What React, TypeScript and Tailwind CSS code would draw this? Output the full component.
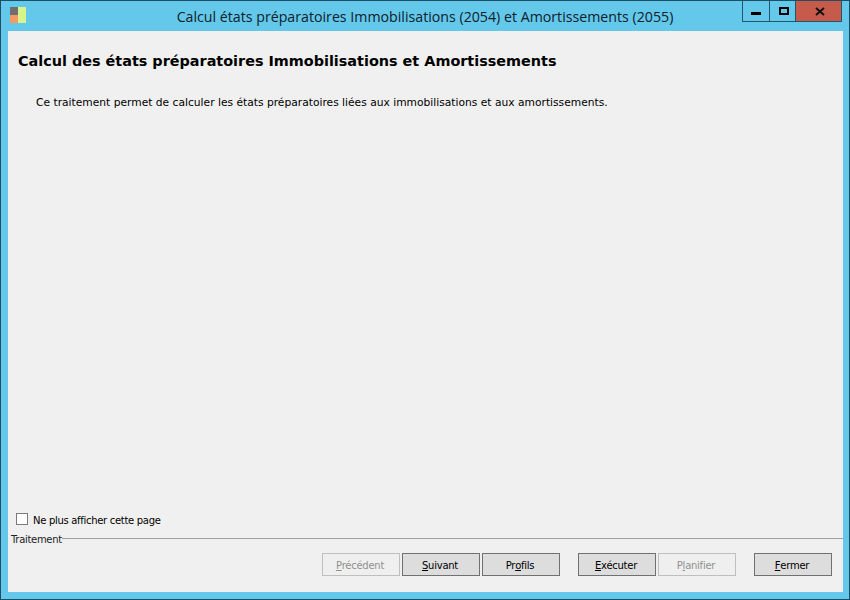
import React from "react";

const tahoma = "font-['DejaVu_Sans',sans-serif]";

interface WizardButtonType {
  before: string;
  mnemonic: string;
  after: string;
  disabled?: boolean;
  className?: string;
}

const WizardButton: React.FC<WizardButtonType> = ({
  before,
  mnemonic,
  after,
  disabled,
  className,
}) => {
  return (
    <div
      className={`flex h-[23px] w-[78px] items-center justify-center border pt-[3px] pr-[2px] text-[10px] leading-none tracking-[-0.25px] ${
        disabled
          ? "border-[#bfbfbf] bg-[#efefef] text-[#8f8f8f]"
          : "border-[#707070] bg-[#dddddd] text-black"
      } ${className ?? ""}`}
    >
      {before}
      <span className="underline">{mnemonic}</span>
      {after}
    </div>
  );
};

const App: React.FC = () => {
  return (
    <div
      className={`flex h-[600px] w-[850px] flex-col border border-[#1d4e63] bg-[#63c8ea] ${tahoma}`}
    >
      <div className="flex h-[30px] items-start">
        <div className="ml-[9px] mt-[6px] flex h-4 w-4 shrink-0">
          <div className="w-2">
            <div className="h-2 bg-[#6f6f6f]"></div>
            <div className="h-2 bg-[#f59a63]"></div>
          </div>
          <div className="w-2 bg-[#d6f58c]"></div>
        </div>
        <div className="ml-[150px] mt-[6px] w-[498px] shrink-0 whitespace-nowrap text-center font-['Open_Sans',sans-serif] text-[14.2px] leading-[20px] text-[#10202a]">
          Calcul états préparatoires Immobilisations (2054) et Amortissements (2055)
        </div>
        <div className="ml-[68px] flex h-[21px] shrink-0 border border-t-0 border-[#24566b]">
          <div className="flex w-[27px] items-center justify-center border-r border-[#24566b]">
            <div className="mt-[4px] h-[3px] w-[10px] bg-black"></div>
          </div>
          <div className="flex w-[26px] items-center justify-center border-r border-[#24566b] pl-[2px]">
            <div className="h-[8px] w-[10px] border-2 border-black"></div>
          </div>
          <div className="flex w-[45px] items-center justify-center bg-[#c75b4b] pl-[2px]">
            <svg width="10" height="9" viewBox="0 0 10 9">
              <path d="M1 1l8 7M9 1L1 8" stroke="#111" strokeWidth="2" fill="none" />
            </svg>
          </div>
        </div>
      </div>

      <div className="mx-[7px] flex h-[561px] w-[835px] flex-col bg-[#f0f0f0]">
        <h1 className="ml-[10px] mt-[20px] whitespace-nowrap text-[14.4px] font-bold leading-[20px] text-black">
          Calcul des états préparatoires Immobilisations et Amortissements
        </h1>
        <p className="ml-[28px] mt-[25px] whitespace-nowrap text-[10.7px] leading-[14px] text-black">
          Ce traitement permet de calculer les états préparatoires liées aux immobilisations et aux amortissements.
        </p>

        <div className="mt-auto">
          <div className="ml-[8px] flex items-center gap-[5px]">
            <div className="h-[12px] w-[12px] border border-[#7a7a7a] bg-white"></div>
            <span className="translate-y-[2px] text-[10px] leading-[14px] tracking-[-0.3px] text-black">Ne plus afficher cette page</span>
          </div>
          <div className="ml-[3px] mt-[7px] flex items-center">
            <span className="text-[10px] leading-[14px] tracking-[-0.3px] text-[#222]">Traitement</span>
            <div className="mt-[-4px] h-px flex-1 bg-[#a0a0a0]"></div>
          </div>
          <div className="mb-[16px] mr-[11px] mt-[6px] flex justify-end">
            <WizardButton before="" mnemonic="P" after="récédent" disabled />
            <WizardButton before="" mnemonic="S" after="uivant" className="ml-[2px]" />
            <WizardButton before="Pr" mnemonic="o" after="fils" className="ml-[2px]" />
            <WizardButton before="" mnemonic="E" after="xécuter" className="ml-[18px]" />
            <WizardButton before="P" mnemonic="l" after="anifier" disabled className="ml-[2px]" />
            <WizardButton before="" mnemonic="F" after="ermer" className="ml-[18px]" />
          </div>
        </div>
      </div>
    </div>
  );
};

export default App;
